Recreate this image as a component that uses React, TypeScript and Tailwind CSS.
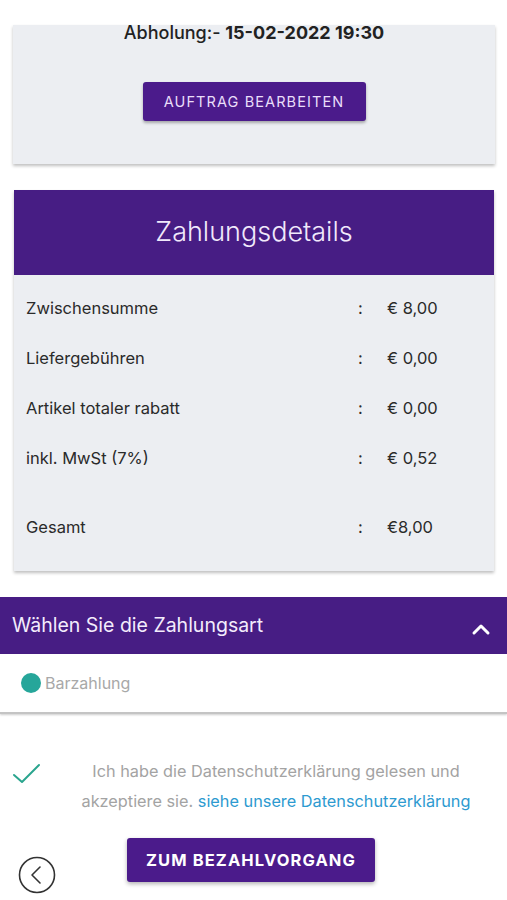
import React from "react";

const rows = [
  { label: "Zwischensumme", value: "€ 8,00" },
  { label: "Liefergebühren", value: "€ 0,00" },
  { label: "Artikel totaler rabatt", value: "€ 0,00" },
  { label: "inkl. MwSt (7%)", value: "€ 0,52" },
];

const Row = ({ label, value }: { label: string; value: string }) => (
  <div className="grid grid-cols-[332px_29px_1fr] h-[50px] items-center pl-[12px] text-[16.5px] text-[#2a2a2a]">
    <span>{label}</span>
    <span>:</span>
    <span>{value}</span>
  </div>
);

export default function App() {
  return (
    <div
      className="w-[507px] h-[900px] overflow-hidden bg-white pt-[25px]"
      style={{ fontFamily: "Inter, 'Noto Sans', sans-serif" }}
    >
      {/* order card */}
      <div className="mx-[13px] w-[482px] bg-[#eceef2] shadow-[0_2px_3px_rgba(0,0,0,0.25)] flex flex-col items-center pb-[43px]">
        <p className="text-[18px] leading-[16px] text-[#222]">
          <span className="font-medium">Abholung:- </span>
          <span className="font-bold">15-02-2022 19:30</span>
        </p>
        <button className="mt-[41px] w-[223px] h-[39px] rounded-[3px] bg-[#4b1b8b] text-[#e9defa] text-[14.5px] tracking-[1.1px] shadow-[0_2px_3px_rgba(0,0,0,0.3)]">
          AUFTRAG BEARBEITEN
        </button>
      </div>

      {/* payment details */}
      <div className="mt-[26px] mx-[14px] w-[480px] bg-[#eceef2] shadow-[0_2px_3px_rgba(0,0,0,0.25)]">
        <div className="h-[85px] bg-[#471d84] flex items-center justify-center">
          <span className="text-[27px] font-light text-[#f1e9fb]">Zahlungsdetails</span>
        </div>
        <div className="pt-[8px] pb-[19px]">
          {rows.map((r) => (
            <Row key={r.label} {...r} />
          ))}
          <div className="mt-[19px]">
            <Row label="Gesamt" value="€8,00" />
          </div>
        </div>
      </div>

      {/* payment method */}
      <div className="mt-[26px] h-[57px] bg-[#471d84] flex items-center justify-between pl-[12px] pr-[16px]">
        <span className="text-[19.5px] text-[#f3ecfc]">Wählen Sie die Zahlungsart</span>
        <svg width="20" height="14" viewBox="0 0 20 14" className="mt-[6px]">
          <path d="M3 11 L10 4 L17 11" fill="none" stroke="white" strokeWidth="3" strokeLinecap="round" strokeLinejoin="round" />
        </svg>
      </div>
      <div className="h-[60px] bg-white flex items-center pl-[21px] border-b-2 border-[#c4c4c4] shadow-[0_1px_2px_rgba(0,0,0,0.2)]">
        <span className="w-[20px] h-[20px] rounded-full bg-[#26a69a]" />
        <span className="ml-[4px] text-[16px] text-[#a8a8a8]">Barzahlung</span>
      </div>

      {/* privacy */}
      <div className="mt-[42px] flex">
        <div className="w-[56px] pl-[12px] pt-[7px]">
          <svg width="30" height="22" viewBox="0 0 30 22">
            <path d="M2 12 L10 19 L27 2" fill="none" stroke="#2aa58e" strokeWidth="2" strokeLinecap="round" strokeLinejoin="round" />
          </svg>
        </div>
        <p className="w-[440px] text-center text-[16.3px] leading-[30px] text-[#a3a3a3]">
          Ich habe die Datenschutzerklärung gelesen und akzeptiere sie.{" "}
          <span className="text-[#2d9ad0]">siehe unsere Datenschutzerklärung</span>
        </p>
      </div>

      {/* footer */}
      <div className="mt-[22px] flex items-start">
        <div className="w-[127px] pl-[18px] pt-[18px]">
          <svg width="38" height="38" viewBox="0 0 38 38">
            <circle cx="19" cy="19" r="17.5" fill="none" stroke="#333" strokeWidth="1.6" />
            <path d="M22 11 L14 19 L22 27" fill="none" stroke="#333" strokeWidth="1.6" strokeLinecap="round" strokeLinejoin="round" />
          </svg>
        </div>
        <button className="w-[248px] h-[44px] rounded-[3px] bg-[#4b1b8b] text-white font-bold text-[16.5px] tracking-[1.1px] shadow-[0_2px_4px_rgba(0,0,0,0.3)]">
          ZUM BEZAHLVORGANG
        </button>
      </div>
    </div>
  );
}
